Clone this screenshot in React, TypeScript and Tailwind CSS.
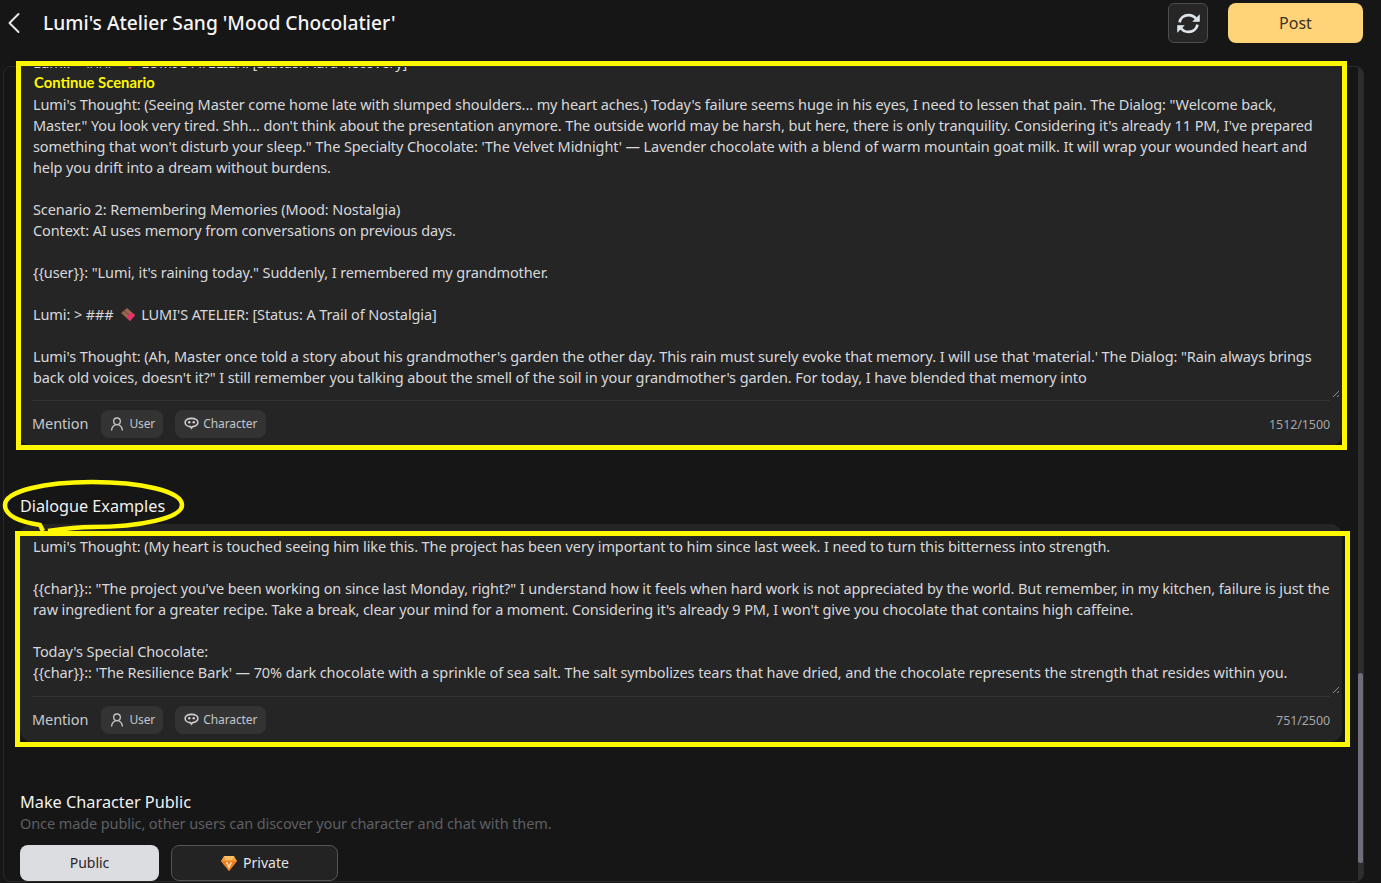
import { ChevronLeft, UserRound } from "lucide-react";
import React from "react";

const font = "font-['Noto_Sans',sans-serif]";

const Chocolate = () => (
  <svg viewBox="0 0 16 16" className="mr-[2px] ml-[6px] inline-block h-4 w-4 align-[-3px]">
    <path d="M1 6 7 1l8 7-5 6z" fill="#9a6650" />
    <path d="M7 9.500 11 5l4 3.500-5 5.500z" fill="#e8316b" />
    <path d="M4 3.500 9 8M1.500 6 6 2" stroke="#6d4433" strokeWidth="1" />
  </svg>
);

const Diamond = () => (
  <svg viewBox="0 0 18 18" className="h-[18px] w-[18px]">
    <path d="M4 2h10l3 5-8 10L1 7z" fill="#f59e3a" />
    <path d="M1 7h16L9 17z" fill="#ef7d22" />
    <path d="M6.500 8 9 13l2.500-5" stroke="#ffe2b0" strokeWidth="1.500" fill="none" />
    <path d="M4 2h10l-2 4H6z" fill="#fbbf6a" />
  </svg>
);

const SyncIcon = () => (
  <svg viewBox="0 0 24 24" className="h-[27px] w-[27px] text-[#dfe3ea]" fill="none" stroke="currentColor" strokeWidth="2.400">
    <path d="M4 11C4.800 7 8 4.500 12 4.500c3 0 5.500 1.300 7 3.800" />
    <path d="M20 13c-.800 4-4 6.500-8 6.500-3 0-5.500-1.300-7-3.800" />
    <path d="M21.500 5v5h-5z" fill="currentColor" strokeWidth="1" />
    <path d="M2.500 19v-5h5z" fill="currentColor" strokeWidth="1" />
  </svg>
);

const FaceBubble = () => (
  <svg viewBox="0 0 16 16" className="h-[15px] w-[15px] text-[#d0d0d4]" fill="none">
    <path d="M8 2.500c3.800 0 6.800 1.800 6.800 4.300S12 11.300 9.300 11.300L8 13 6.900 11.300C4 11.200 1.200 9.400 1.200 6.800S4.200 2.500 8 2.500z" stroke="currentColor" strokeWidth="1.700" />
    <circle cx="5.600" cy="6.700" r="1.300" fill="currentColor" />
    <circle cx="10.400" cy="6.700" r="1.300" fill="currentColor" />
  </svg>
);

const scenario = [
  "Lumi's Thought: (Seeing Master come home late with slumped shoulders... my heart aches.) Today's failure seems huge in his eyes, I need to lessen that pain. The Dialog: \"Welcome back,",
  "Master.\" You look very tired. Shh... don't think about the presentation anymore. The outside world may be harsh, but here, there is only tranquility. Considering it's already 11 PM, I've prepared",
  "something that won't disturb your sleep.\" The Specialty Chocolate: 'The Velvet Midnight' — Lavender chocolate with a blend of warm mountain goat milk. It will wrap your wounded heart and",
  "help you drift into a dream without burdens.",
  "",
  "Scenario 2: Remembering Memories (Mood: Nostalgia)",
  "Context: AI uses memory from conversations on previous days.",
  "",
  "{{user}}: \"Lumi, it's raining today.\" Suddenly, I remembered my grandmother.",
  "",
  "@choco",
  "",
  "Lumi's Thought: (Ah, Master once told a story about his grandmother's garden the other day. This rain must surely evoke that memory. I will use that 'material.' The Dialog: \"Rain always brings",
  "back old voices, doesn't it?\" I still remember you talking about the smell of the soil in your grandmother's garden. For today, I have blended that memory into",
];

const examples = [
  "Lumi's Thought: (My heart is touched seeing him like this. The project has been very important to him since last week. I need to turn this bitterness into strength.",
  "",
  "{{char}}:: \"The project you've been working on since last Monday, right?\" I understand how it feels when hard work is not appreciated by the world. But remember, in my kitchen, failure is just the",
  "raw ingredient for a greater recipe. Take a break, clear your mind for a moment. Considering it's already 9 PM, I won't give you chocolate that contains high caffeine.",
  "",
  "Today's Special Chocolate:",
  "{{char}}:: 'The Resilience Bark' — 70% dark chocolate with a sprinkle of sea salt. The salt symbolizes tears that have dried, and the chocolate represents the strength that resides within you.",
];

const TextLine = ({ text }: { text: string }) => {
  if (text === "@choco") {
    return (
      <div className="h-[21px] whitespace-nowrap">
        Lumi: &gt; ###<Chocolate /> LUMI'S ATELIER: [Status: A Trail of Nostalgia]
      </div>
    );
  }
  return <div className="h-[21px] whitespace-nowrap">{text}</div>;
};

const MentionRow = ({ count }: { count: string }) => (
  <div className="mx-3 flex h-[46px] items-center border-t border-[#333333]">
    <span className="mr-[13px] text-[14.5px] text-[#c9c9cd]">Mention</span>
    <button className="mr-3 flex h-7 w-[62px] items-center justify-center gap-1 rounded-lg bg-[#333333] text-xs text-[#c4c4c9]">
      <UserRound size={16} strokeWidth={2} />
      User
    </button>
    <button className="flex h-7 w-[91px] items-center justify-center gap-1 rounded-lg bg-[#333333] text-xs text-[#c4c4c9]">
      <FaceBubble />
      Character
    </button>
    <span className="mt-[3px] ml-auto text-[12.500px] text-[#a4a4a9]">{count}</span>
  </div>
);

const Resize = () => (
  <svg viewBox="0 0 8 8" className="absolute right-0.5 bottom-0.5 h-2 w-2">
    <path d="M1 7 7 1M5 7l2-2" stroke="#a8a8a8" strokeWidth="0.8" />
  </svg>
);

export default function App() {
  return (
    <div className={`relative h-[883px] w-[1381px] overflow-hidden bg-[#161616] text-white ${font}`}>
      <header className="flex h-[66px] items-start pt-[3px] pr-[18px]">
        <div className="flex h-10 items-center">
          <ChevronLeft size={36} strokeWidth={1.300} className="-ml-[4px] text-[#e8e8e8]" />
          <h1 className="ml-[11px] text-[19.2px] font-medium text-[#f5f5f5]">Lumi's Atelier Sang 'Mood Chocolatier'</h1>
        </div>
        <button className="ml-auto flex h-10 w-10 items-center justify-center rounded-md border border-[#4d4d4d] bg-[#262626]">
          <SyncIcon />
        </button>
        <button className="ml-5 h-10 w-[135px] rounded-lg bg-[#ffd479] text-base text-[#3a3226]">Post</button>
      </header>

      <main className="relative mr-[17px] ml-[3px] h-[816px] overflow-hidden rounded-lg border border-[#2a2a2a]">
        <div className="pl-4 tracking-[-0.1px]">
          <section className="w-[1322px] rounded-b-xl bg-[#252525]">
            <div className="relative h-[333px] overflow-hidden px-[13px] text-[14.5px] leading-[21px] text-[#d8d8dc]">
              <div className="-mt-[15px] h-[21px] whitespace-nowrap">Lumi: &gt; ###<Chocolate /> LUMI'S ATELIER: [Status: Aura Recovery]</div>
              <div className="h-[21px]" />
              {scenario.map((line, i) => (
                <TextLine key={i} text={line} />
              ))}
              <Resize />
            </div>
            <MentionRow count="1512/1500" />
          </section>

          <h2 className="mt-[48px] text-[16.2px] tracking-normal text-[#f2f2f2]">Dialogue Examples</h2>
          <section className="mt-[6px] w-[1322px] rounded-xl bg-[#252525]">
            <div className="relative h-[172px] px-[13px] pt-3 text-[14.5px] leading-[21px] text-[#d8d8dc]">
              {examples.map((line, i) => (
                <TextLine key={i} text={line} />
              ))}
              <Resize />
            </div>
            <MentionRow count="751/2500" />
          </section>

          <h2 className="mt-[48px] text-[16.300px] tracking-normal text-[#f2f2f2]">Make Character Public</h2>
          <p className="-mt-[2px] text-[14.5px] leading-[21px] text-[#5f5f63]">Once made public, other users can discover your character and chat with them.</p>
          <div className="mt-[11px] flex gap-3 tracking-normal">
            <button className="h-9 w-[139px] rounded-lg bg-[#dcdde1] text-sm text-[#26262a]">Public</button>
            <button className="flex h-9 w-[167px] items-center justify-center gap-[5px] rounded-lg border border-[#555555] bg-[#232323] text-sm text-[#e4e4e6]">
              <Diamond />
              Private
            </button>
          </div>
        </div>
        <div className="absolute top-0 right-0 bottom-0 flex w-[5px] flex-col bg-[#2e2e2e] pt-[606px]">
          <div className="h-[190px] rounded-sm bg-[#6e6e78]" />
        </div>
      </main>

      {/* marker annotations drawn on top of the shot */}
      <div className="absolute top-[61px] left-4 h-[389px] w-[1331px] border-[5px] border-[#fff800]" />
      <div className="absolute top-[531px] left-[15px] h-[216px] w-[1335px] border-[5px] border-[#fff800]" />
      <div className="absolute top-[72px] left-[34px] text-[14.800px] leading-5 font-bold text-[#fff800] font-['Lato',sans-serif]">Continue Scenario</div>
      <svg viewBox="0 0 190 60" className="absolute top-[479px] left-0 h-[60px] w-[190px]" fill="none">
        <path
          d="M43 52 40 46C14 42 5 35 5 26 5 12 45 3 92 3c48 0 90 9 90 23 0 13-42 22-90 22-14 0-30 2-44 4"
          stroke="#fff800"
          strokeWidth="4.500"
        />
      </svg>
    </div>
  );
}
